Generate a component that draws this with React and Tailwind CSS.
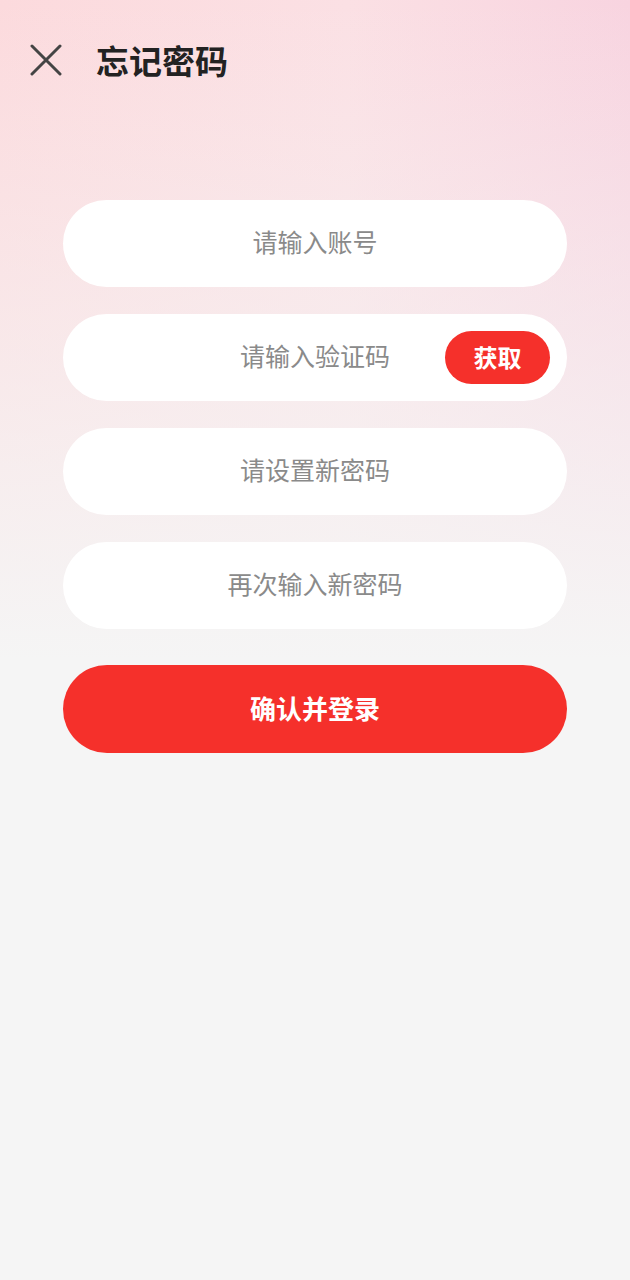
import React from "react";

const font = { fontFamily: '"Noto Sans CJK SC", "Noto Sans", sans-serif' };

function Field({ placeholder, children }) {
  return (
    <div className="relative flex h-[87px] w-full items-center justify-center rounded-full bg-white">
      <span className="pb-[3px] text-[25px] text-[#8a8a8a]">{placeholder}</span>
      {children}
    </div>
  );
}

export default function App() {
  return (
    <div
      className="min-h-[1280px] w-[630px] bg-[#f5f5f5] bg-no-repeat bg-[length:630px_660px] bg-[linear-gradient(to_bottom,rgba(245,245,245,0)_0%,rgba(245,245,245,0.45)_45%,#f5f5f5_100%),linear-gradient(to_right,#fcdadd_0%,#fbe0e4_55%,#f8d4e0_100%)]"
      style={font}
    >
      <div className="flex h-[124px] items-center pb-[4px] pl-[30px]">
        <svg width="32" height="32" viewBox="0 0 32 32" fill="none">
          <path d="M2 2L30 30M30 2L2 30" stroke="#444" strokeWidth="3" strokeLinecap="round" />
        </svg>
        <h1 className="ml-[34px] text-[33px] font-bold leading-none text-[#222]">忘记密码</h1>
      </div>
      <div className="flex flex-col gap-[27px] px-[63px] pt-[76px]">
        <Field placeholder="请输入账号" />
        <Field placeholder="请输入验证码">
          <button className="absolute right-[17px] top-[17px] flex h-[53px] w-[105px] items-center justify-center rounded-full bg-[#f5302b] pb-[2px] text-[24px] font-bold text-white">
            获取
          </button>
        </Field>
        <Field placeholder="请设置新密码" />
        <Field placeholder="再次输入新密码" />
      </div>
      <div className="px-[63px] pt-[36px]">
        <button className="flex h-[88px] w-full items-center justify-center rounded-full bg-[#f5302b] pb-[3px] text-[26px] font-bold text-white">
          确认并登录
        </button>
      </div>
    </div>
  );
}
